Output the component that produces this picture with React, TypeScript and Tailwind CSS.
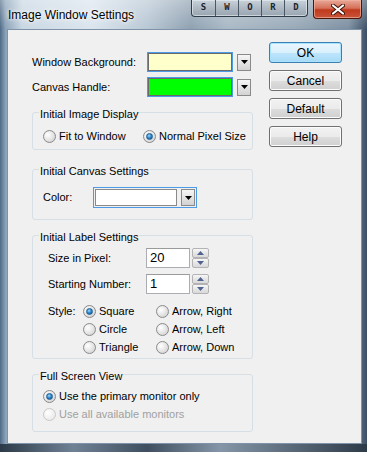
import type { ReactNode } from "react";

const FONT = "font-['Liberation_Sans',Arial,sans-serif]";

function Radio({ checked, disabled }: { checked?: boolean; disabled?: boolean }) {
  return (
    <span
      className={`inline-flex h-[13px] w-[13px] shrink-0 items-center justify-center rounded-full border ${
        disabled
          ? "border-[#c9c9c9] bg-[radial-gradient(circle_at_35%_35%,#ffffff,#eeeeee_60%,#e2e2e2)]"
          : "border-[#8a8a8a] bg-[radial-gradient(circle_at_35%_35%,#ffffff,#e3e3e3_55%,#c9c9c9)]"
      }`}
    >
      {checked && (
        <span className="h-[7px] w-[7px] rounded-full border border-[#1f5f95] bg-[radial-gradient(circle_at_40%_35%,#a8dcf8,#2f8ad0_45%,#0e4c86)]" />
      )}
    </span>
  );
}

function RadioItem({
  label,
  checked,
  disabled,
  className = "",
}: {
  label: string;
  checked?: boolean;
  disabled?: boolean;
  className?: string;
}) {
  return (
    <div className={`flex items-center gap-[3px] ${className}`}>
      <Radio checked={checked} disabled={disabled} />
      <span className={disabled ? "text-[#a0a0a0]" : "text-black"}>{label}</span>
    </div>
  );
}

function DropArrow() {
  return (
    <div className="flex h-[17px] w-[14px] items-center justify-center border border-[#8a8a8a] bg-[linear-gradient(#f6f6f6,#e4e4e4_50%,#d2d2d2)]">
      <svg width="7" height="4" viewBox="0 0 7 4">
        <path d="M0 0h7L3.5 4z" fill="#000" />
      </svg>
    </div>
  );
}

function Group({
  title,
  className,
  children,
}: {
  title: string;
  className: string;
  children: ReactNode;
}) {
  return (
    <div className={`relative rounded-[3px] border border-[#d5dfe5] ${className}`}>
      <span className="absolute left-[6px] top-[-6px] bg-[#f0f0f0] px-[1px] leading-[14px]">
        {title}
      </span>
      {children}
    </div>
  );
}

function SpinBox({ value }: { value: string }) {
  return (
    <div className="flex items-start gap-[2px]">
      <div className="flex h-[20px] w-[44px] items-center border border-[#abadb3] border-t-[#9a9a9a] bg-white pl-[3px] text-[13px]">
        {value}
      </div>
      <div className="flex flex-col">
        {["up", "down"].map((d) => (
          <div
            key={d}
            className="flex h-[10px] w-[17px] items-center justify-center rounded-[2px] border border-[#b3b3b3] bg-[linear-gradient(#f7f7f7,#e6e6e6_50%,#d9d9d9)]"
          >
            <svg width="7" height="4" viewBox="0 0 7 4">
              <path d={d === "up" ? "M0 4h7L3.5 0z" : "M0 0h7L3.5 4z"} fill="#4f6290" />
            </svg>
          </div>
        ))}
      </div>
    </div>
  );
}

function DlgButton({ label, primary }: { label: string; primary?: boolean }) {
  return (
    <div
      className={`flex h-[21px] w-[73px] items-center justify-center rounded-[3px] border text-[12px] ${
        primary
          ? "border-[#3c7fb1] bg-[linear-gradient(#eaf6fd,#d9f0fc_50%,#bee6fd_52%,#a7d9f5)] shadow-[inset_0_0_0_1px_#a8e2ff]"
          : "border-[#707070] bg-[linear-gradient(#f2f2f2,#ebebeb_50%,#dddddd_52%,#cfcfcf)] shadow-[inset_0_0_0_1px_#fcfcfc]"
      }`}
    >
      {label}
    </div>
  );
}

export default function App() {
  return (
    <div
      className={`${FONT} flex h-[452px] w-[367px] flex-col overflow-hidden bg-[linear-gradient(90deg,#4f6a86_0%,#8aa2b8_1.5%,#c9d7e3_6%,#dbe5ee_25%,#b9c8d5_40%,#8fa1b1_52%,#aab9c6_62%,#9aaab8_80%,#7d90a2_95%,#3d5066_100%)] text-[11px] text-black`}
    >
      {/* title bar */}
      <div className="flex h-[29px] shrink-0 items-start bg-[linear-gradient(#ffffff55,#ffffff00)]">
        <span className="mt-[7px] pl-[8px] text-[12px] leading-[16px] text-black [text-shadow:0_0_6px_#ffffff,0_0_3px_#ffffff]">
          Image Window Settings
        </span>
        <div className="ml-auto flex h-[17px] overflow-hidden rounded-b-[4px] border border-t-0 border-[#2f3c4a] bg-[linear-gradient(#c9d2da,#aeb9c3_50%,#98a5b1)] shadow-[inset_0_0_0_1px_#e5ebf0aa]">
          {["S", "W", "O", "R", "D"].map((l, i) => (
            <div
              key={l}
              className={`flex w-[23px] items-center justify-center font-['DejaVu_Sans_Mono',monospace] text-[9px] font-bold text-[#1c242c] ${
                i > 0 ? "border-l border-[#4a5866]" : ""
              }`}
            >
              {l}
            </div>
          ))}
        </div>
        <div className="ml-[5px] mr-[5px] flex h-[19px] w-[49px] items-center justify-center rounded-b-[4px] border border-t-0 border-[#4e1509] bg-[linear-gradient(#e9a898,#d5715a_45%,#c1391d_55%,#c8553a)] shadow-[inset_0_0_0_1px_#f0b6a4aa]">
          <svg width="14" height="11" viewBox="0 0 14 11">
            <path d="M2 1.5l10 8M12 1.5l-10 8" stroke="#3d1108" strokeWidth="4" strokeLinecap="round" />
            <path d="M2 1.5l10 8M12 1.5l-10 8" stroke="#ffffff" strokeWidth="2.2" strokeLinecap="round" />
          </svg>
        </div>
      </div>

      {/* client area */}
      <div className="ml-[7px] flex h-[415px] w-[355px] shrink-0 border border-[#7e93a8] bg-[#f0f0f0]">
        <div className="flex w-[245px] flex-col pl-[24px] pt-[22px]">
          <div className="flex h-[20px] items-center">
            <span className="w-[115px]">Window Background:</span>
            <div className="h-[20px] w-[86px] border border-[#4d9be6] p-0">
              <div className="h-full w-full border border-[#6a6a6a] bg-[#ffffcc]" />
            </div>
            <div className="ml-[4px]">
              <DropArrow />
            </div>
          </div>
          <div className="mt-[5px] flex h-[20px] items-center">
            <span className="w-[115px]">Canvas Handle:</span>
            <div className="h-[20px] w-[86px] border border-[#4d9be6]">
              <div className="h-full w-full border border-[#6a6a6a] bg-[#00ff00]" />
            </div>
            <div className="ml-[4px]">
              <DropArrow />
            </div>
          </div>

          <Group title="Initial Image Display" className="mt-[15px] h-[38px] w-[221px]">
            <div className="flex pl-[10px] pt-[15px]">
              <RadioItem label="Fit to Window" className="w-[100px]" />
              <RadioItem label="Normal Pixel Size" checked />
            </div>
          </Group>

          <Group title="Initial Canvas Settings" className="mt-[19px] h-[51px] w-[221px]">
            <div className="flex items-center pl-[10px] pt-[17px]">
              <span className="w-[50px]">Color:</span>
              <div className="flex h-[21px] items-center gap-[4px] border border-[#4d9be6] px-[1px]">
                <div className="h-[17px] w-[82px] border border-[#8a8a8a] bg-white" />
                <DropArrow />
              </div>
            </div>
          </Group>

          <Group title="Initial Label Settings" className="mt-[15px] h-[124px] w-[221px]">
            <div className="flex flex-col pl-[15px] pt-[12px]">
              <div className="flex items-center">
                <span className="w-[98px]">Size in Pixel:</span>
                <SpinBox value="20" />
              </div>
              <div className="mt-[6px] flex items-center">
                <span className="w-[98px]">Starting Number:</span>
                <SpinBox value="1" />
              </div>
              <div className="mt-[8px] flex">
                <span className="w-[35px] leading-[18px]">Style:</span>
                <div className="grid grid-cols-[73px_auto] auto-rows-[18px]">
                  <RadioItem label="Square" checked />
                  <RadioItem label="Arrow, Right" />
                  <RadioItem label="Circle" />
                  <RadioItem label="Arrow, Left" />
                  <RadioItem label="Triangle" />
                  <RadioItem label="Arrow, Down" />
                </div>
              </div>
            </div>
          </Group>

          <Group title="Full Screen View" className="mt-[15px] h-[58px] w-[221px]">
            <div className="flex flex-col pl-[10px] pt-[12px]">
              <RadioItem label="Use the primary monitor only" checked className="h-[18px]" />
              <RadioItem label="Use all available monitors" disabled className="h-[18px]" />
            </div>
          </Group>
        </div>

        <div className="ml-[16px] flex flex-col gap-[7px] pt-[12px]">
          <DlgButton label="OK" primary />
          <DlgButton label="Cancel" />
          <DlgButton label="Default" />
          <DlgButton label="Help" />
        </div>
      </div>
      <div className="h-[8px] bg-[linear-gradient(90deg,#2c3a48,#6f8294_20%,#3f4f60_40%,#8496a7_60%,#2e3b49)]" />
    </div>
  );
}
